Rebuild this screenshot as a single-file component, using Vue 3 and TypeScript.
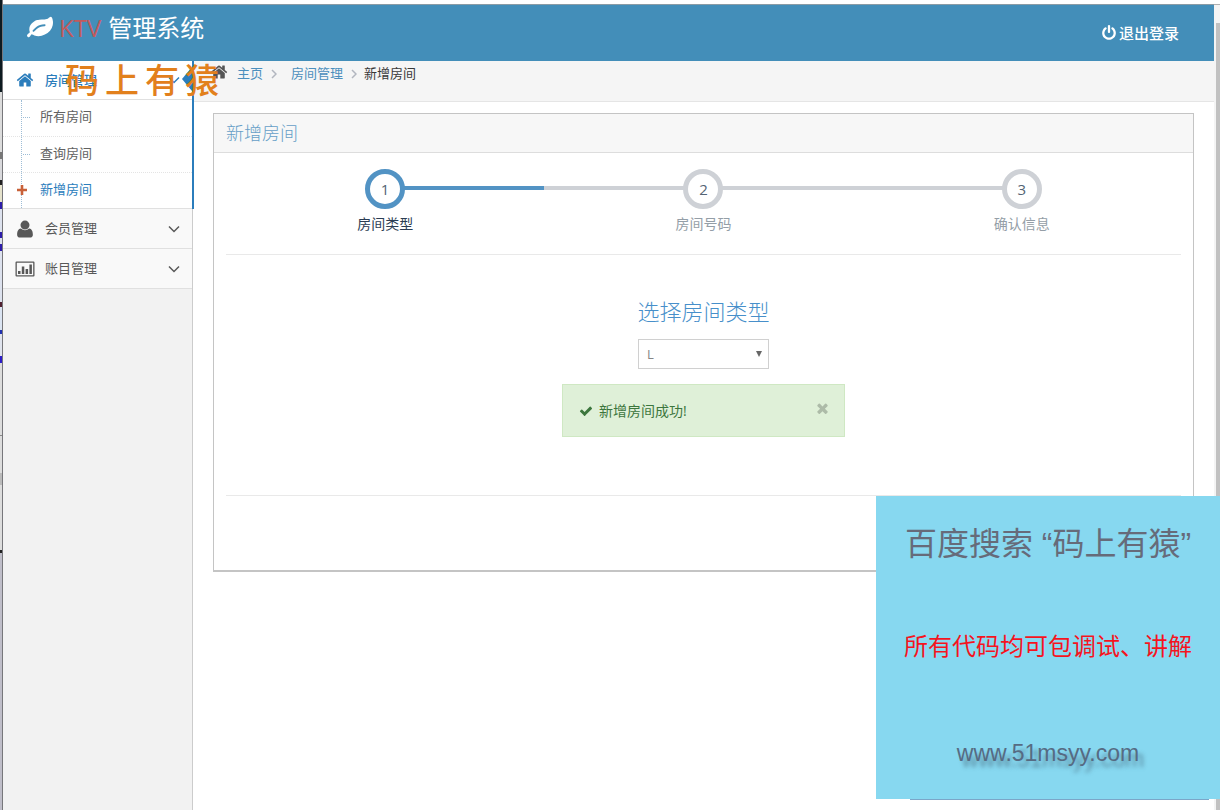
<script setup lang="ts">
import { ref } from 'vue'

interface Step {
  id: number
  label: string
}

const steps: Step[] = [
  { id: 1, label: '房间类型' },
  { id: 2, label: '房间号码' },
  { id: 3, label: '确认信息' },
]
const currentStep = ref(1)

const roomLinks: string[] = ['所有房间', '查询房间', '新增房间']
const activeLink = ref('新增房间')

const roomType = ref('L')
const showAlert = ref(true)
const mark: string[] = ['码', '上', '有', '猿']

const homePath =
  'M1472 992v480q0 26-19 45t-45 19h-384v-384h-256v384h-384q-26 0-45-19t-19-45v-480q0-1 .5-3t.5-3l575-474 575 474q1 2 1 6zm223-69l-62 74q-8 9-21 11h-3q-13 0-21-7l-692-577-692 577q-12 8-24 7-13-2-21-11l-62-74q-8-10-7-23.5t11-21.500l719-599q32-26 76-26t76 26l244 204v-195q0-14 9-23t23-9h192q14 0 23 9t9 23v408l219 182q10 8 11 21.500t-7 23.500z'
</script>

<template>
  <div class="screen">
    <div class="edge"></div>
    <div class="app">
      <header class="navbar">
        <a class="brand" href="#">
          <svg class="leaf" viewBox="0 0 1792 1792" aria-hidden="true">
            <path
              d="M1280 704q0-26-19-45t-45-19q-172 0-318 49.5t-259.5 134-235.5 219.5q-19 21-19 45 0 26 19 45t45 19q24 0 45-19 27-24 74-71t67-66q137-124 268.5-176t313.5-52q26 0 45-19t19-45zm512-198q0 95-20 193-46 224-184.5 383t-357.5 268q-214 108-438 108-148 0-286-47-15-5-88-42t-96-37q-16 0-39.5 32t-45 70-52.5 70-60 32q-43 0-63.5-17.5t-45.5-59.5q-2-4-6-11t-5.5-10-3-9.5-1.5-13.5q0-35 31-73.5t68-65.500 68-56 31-48q0-4-14-38t-16-44q-9-51-9-104 0-115 43.5-220t119-184.5 170.5-139 204-95.500q55-18 145-25.500t179.5-9 178.5-6 163.5-24 113.5-56.500l29.5-29.500 29.5-28 27-20 36.5-16 43.5-4.500q39 0 70.5 46t47.5 112 24 124 8 96z"
            />
          </svg>
          <span class="red">KTV</span>
          <span>管理系统</span>
        </a>
        <button type="button" class="logout">
          <svg viewBox="0 0 1792 1792" aria-hidden="true">
            <path
              d="M1664 896q0 156-61 298t-164 245-245 164-298 61-298-61-245-164-164-245-61-298q0-182 80.5-343t226.5-270q43-32 95.5-25t83.5 50q32 42 24.5 94.5t-49.5 84.5q-98 74-151.5 181t-53.5 228q0 104 40.5 198.5t109.5 163.5 163.5 109.5 198.5 40.5 198.5-40.5 163.5-109.5 109.5-163.5 40.5-198.5q0-121-53.5-228t-151.5-181q-42-32-49.5-84.5t24.5-94.5q31-43 84-50t95 25q146 109 226.5 270t80.5 343zm-640-768v640q0 52-38 90t-90 38-90-38-38-90v-640q0-52 38-90t90-38 90 38 38 90z"
            />
          </svg>
          退出登录
        </button>
      </header>

      <div class="body">
        <nav class="sidebar">
          <div class="group open">
            <a class="item" href="#">
              <svg class="item-icon" viewBox="0 0 1792 1792" aria-hidden="true"><path :d="homePath" /></svg>
              <span class="item-text">房间管理</span>
              <svg class="angle" viewBox="0 0 12 8" aria-hidden="true"><path d="M1 1.500l5 5 5-5" /></svg>
            </a>
            <ul class="submenu">
              <li v-for="link in roomLinks" :key="link" :class="{ active: link === activeLink }">
                <a href="#" @click.prevent="activeLink = link">
                  <svg v-if="link === activeLink" class="plus" viewBox="0 0 10 10" aria-hidden="true">
                    <path d="M3.700 0h2.600v3.700h3.700v2.600h-3.700v3.700h-2.600v-3.700h-3.700v-2.600h3.700z" />
                  </svg>
                  {{ link }}
                </a>
              </li>
            </ul>
          </div>
          <a class="item" href="#">
            <svg class="item-icon" viewBox="0 0 16 16" aria-hidden="true">
              <path
                d="M8 .5a4 4 0 0 1 4 4a4 4 0 0 1-8 0a4 4 0 0 1 4-4zM4.300 7.500q1.700 1.600 3.700 1.600t3.700-1.600c2.300.2 3.300 2.600 3.300 5.500 0 1.600-1 2.500-2.500 2.500h-9c-1.500 0-2.500-.9-2.500-2.500 0-2.900 1-5.300 3.300-5.500z"
              />
            </svg>
            <span class="item-text">会员管理</span>
            <svg class="angle" viewBox="0 0 12 8" aria-hidden="true"><path d="M1 1.500l5 5 5-5" /></svg>
          </a>
          <a class="item" href="#">
            <svg class="item-icon chart" viewBox="0 0 20 16" aria-hidden="true">
              <path
                fill-rule="evenodd"
                d="M1.500 0.500h17a1 1 0 0 1 1 1v13a1 1 0 0 1-1 1h-17a1 1 0 0 1-1-1v-13a1 1 0 0 1 1-1zM1.800 1.800v12.400h16.400v-12.400zM3 10h2.500v3h-2.500zM6.800 5.500h2.500v7.500h-2.500zM10.600 8h2.500v5h-2.500zM14.400 3.500h2.500v9.500h-2.500z"
              />
            </svg>
            <span class="item-text">账目管理</span>
            <svg class="angle" viewBox="0 0 12 8" aria-hidden="true"><path d="M1 1.500l5 5 5-5" /></svg>
          </a>
        </nav>

        <main class="content">
          <nav class="crumbs" aria-label="breadcrumb">
            <svg class="crumb-home" viewBox="0 0 1792 1792" aria-hidden="true"><path :d="homePath" /></svg>
            <a href="#">主页</a>
            <svg class="sep" viewBox="0 0 6 10" aria-hidden="true"><path d="M1 1l4 4-4 4" /></svg>
            <a class="second" href="#">房间管理</a>
            <svg class="sep" viewBox="0 0 6 10" aria-hidden="true"><path d="M1 1l4 4-4 4" /></svg>
            <span>新增房间</span>
          </nav>

          <section class="panel">
            <h1 class="panel-title">新增房间</h1>
            <div class="panel-body">
              <ol class="steps">
                <li v-for="step in steps" :key="step.id" :class="{ active: step.id === currentStep }">
                  <span class="num">{{ step.id }}</span>
                  <span class="label">{{ step.label }}</span>
                </li>
              </ol>
              <div class="form">
                <label for="room-type">选择房间类型</label>
                <div class="select-box">
                  <select id="room-type" v-model="roomType">
                    <option>L</option>
                    <option>M</option>
                    <option>S</option>
                  </select>
                  <svg viewBox="0 0 6 6" aria-hidden="true"><path d="M0 0h6l-3 6z" /></svg>
                </div>
                <div v-if="showAlert" class="alert" role="alert">
                  <svg class="check" viewBox="0 0 1792 1792" aria-hidden="true">
                    <path
                      d="M1671 566q0 40-28 68l-724 724-136 136q-28 28-68 28t-68-28l-136-136-362-362q-28-28-28-68t28-68l136-136q28-28 68-28t68 28l294 295 656-657q28-28 68-28t68 28l136 136q28 28 28 68z"
                    />
                  </svg>
                  <span>新增房间成功!</span>
                  <button type="button" aria-label="关闭" @click="showAlert = false">
                    <svg viewBox="302 302 1188 1252" aria-hidden="true">
                      <path
                        d="M1490 1322q0 40-28 68l-136 136q-28 28-68 28t-68-28l-294-294-294 294q-28 28-68 28t-68-28l-136-136q-28-28-28-68t28-68l294-294-294-294q-28-28-28-68t28-68l136-136q28-28 68-28t68 28l294 294 294-294q28-28 68-28t68 28l136 136q28 28 28 68t-28 68l-294 294 294 294q28 28 28 68z"
                      />
                    </svg>
                  </button>
                </div>
              </div>
            </div>
          </section>
        </main>
      </div>
    </div>
    <div class="scroll"><div class="thumb"></div></div>

    <div class="mark"><span v-for="ch in mark" :key="ch">{{ ch }}</span></div>

    <aside class="promo">
      <p class="promo-title">百度搜索 “码上有猿”</p>
      <p class="promo-red">所有代码均可包调试、讲解</p>
      <a href="#" class="promo-url">www.51msyy.com</a>
    </aside>
  </div>
</template>

<style>
body {
  margin: 0;
  background: #fff;
}
</style>

<style scoped>
.screen {
  position: relative;
  display: flex;
  min-height: 100vh;
  box-sizing: border-box;
  overflow: hidden;
  font: 13px/20px 'Open Sans', 'Noto Sans CJK SC', sans-serif;
  color: #393939;
}
.screen * {
  box-sizing: border-box;
}
a {
  color: inherit;
  text-decoration: none;
}
svg {
  display: block;
  flex: none;
  fill: currentColor;
}
.edge {
  flex: none;
  width: 3px;
  border-right: 1px solid #77777b;
  background: linear-gradient(
    #0d1a20 0 92px, #dcdcdc 92px 152px, #777 152px 159px, #d9d9dc 159px 180px,
    #222 180px 185px, #e5e2cc 185px 202px, #2c1caa 202px 209px, #dde2ee 209px 232px,
    #2c1caa 232px 238px, #dde2ee 238px 244px, #2c1caa 244px 251px, #dde2ee 251px 302px,
    #502030 302px 307px, #dbe4f2 307px 330px, #2030b0 330px 334px, #e0e4ee 334px 356px,
    #2c1cc8 356px 363px, #ddd 363px 435px, #888 435px 436px, #ddd 436px 473px,
    #bbb 473px 485px, #ddd 485px 550px, #222 550px 553px, #bfbec9 553px
  );
}
.app {
  flex: 1;
  min-width: 0;
  display: flex;
  flex-direction: column;
  padding-top: 4px;
}
.navbar {
  display: flex;
  align-items: center;
  justify-content: space-between;
  height: 57px;
  padding: 0 35px 0 24px;
  border-top: 1px solid #8a9ba5;
  background: #438eb9;
  color: #fff;
}
.brand {
  display: flex;
  align-items: center;
  height: 46px;
  margin-bottom: 10px;
  font-size: 24px;
  line-height: 36px;
}
.leaf {
  width: 26px;
  height: 26px;
  margin-right: 6px;
}
.red {
  margin-right: 7px;
  color: #c25a5c;
}
.logout {
  display: flex;
  align-items: center;
  gap: 2px;
  padding: 0;
  border: 0;
  background: none;
  color: #fff;
  font: 500 15px/24px 'Open Sans', 'Noto Sans CJK SC', sans-serif;
  cursor: pointer;
}
.logout svg {
  width: 16px;
  height: 16px;
}
.body {
  flex: 1;
  display: flex;
}
.sidebar {
  position: relative;
  z-index: 1;
  flex: none;
  width: 190px;
  border-right: 1px solid #ccc;
  background: #f2f2f2;
}
.item {
  display: flex;
  align-items: center;
  height: 40px;
  padding: 0 12px;
  border-bottom: 1px solid #e0e0e0;
  background: #f9f9f9;
  color: #585858;
}
.item-icon {
  width: 20px;
  height: 18px;
  margin-right: 10px;
}
.chart {
  height: 16px;
}
.item-text {
  flex: 1;
  padding-bottom: 1px;
}
.angle {
  width: 12px;
  height: 8px;
  fill: none;
  stroke: currentColor;
  stroke-width: 1.5;
}
.group {
  position: relative;
  margin-right: -2px;
  border-right: 2px solid #2b7dbc;
  background: #fff;
}
.group::after {
  content: '';
  position: absolute;
  top: 6px;
  right: 0;
  border: 12px solid transparent;
  border-left: 0;
  border-right: 10px solid #2b7dbc;
}
.group .item {
  height: 39px;
  background: #fff;
  color: #2b7dbc;
  font-weight: 500;
}
.submenu {
  position: relative;
  margin: 0;
  padding: 0;
  border-bottom: 1px solid #e0e0e0;
  list-style: none;
}
.submenu::before {
  content: '';
  position: absolute;
  top: 0;
  bottom: 0;
  left: 18px;
  border-left: 1px dotted #9dbdd6;
}
.submenu li {
  position: relative;
  height: 36px;
}
.submenu li + li {
  border-top: 1px dotted #e4e4e4;
}
.submenu li::before {
  content: '';
  position: absolute;
  top: 17px;
  left: 20px;
  width: 7px;
  border-top: 1px dotted #9dbdd6;
}
.submenu li.active::before {
  display: none;
}
.submenu a {
  display: block;
  padding: 6px 0 8px 37px;
  color: #616161;
}
.submenu .active a {
  color: #2b7dbc;
}
.plus {
  position: absolute;
  top: 12px;
  left: 14px;
  width: 10px;
  height: 10px;
  color: #c86139;
}
.content {
  flex: 1;
  min-width: 0;
  background: #fff;
}
.crumbs {
  display: flex;
  align-items: flex-start;
  height: 41px;
  padding: 2px 17px 0;
  border-bottom: 1px solid #e5e5e5;
  background: #f5f5f5;
}
.crumbs a {
  color: #4c8fbd;
}
.crumb-home {
  width: 18px;
  height: 18px;
  margin-right: 9px;
  color: #555;
}
.sep {
  width: 6px;
  height: 10px;
  margin: 6px 7px 0 8px;
  fill: none;
  stroke: #b2b6bf;
  stroke-width: 1.5;
}
.second {
  margin-left: 7px;
}
.panel {
  margin: 11px 20px 0;
  border: 1px solid #c4c4c4;
  border-bottom-width: 2px;
}
.panel-title {
  margin: 0;
  padding: 0 12px;
  border-bottom: 1px solid #ddd;
  background: #f7f7f7;
  color: #669fc7;
  font-size: 18px;
  font-weight: 300;
  line-height: 38px;
}
.panel-body {
  padding: 16px 12px 74px;
}
.steps {
  display: flex;
  margin: 0;
  padding: 0 0 20px;
  border-bottom: 1px solid #e9e9e9;
  list-style: none;
}
.steps li {
  position: relative;
  flex: 1;
  display: flex;
  flex-direction: column;
  align-items: center;
  color: #949ea7;
}
.steps li::before {
  content: '';
  position: absolute;
  top: 17px;
  left: 0;
  right: 0;
  height: 4px;
  background: #ced1d6;
}
.steps li:first-child::before {
  left: 50%;
}
.steps li:last-child::before {
  right: 50%;
}
.steps li.active::before {
  background: #5293c4;
}
.num {
  position: relative;
  width: 40px;
  height: 40px;
  border: 5px solid #ced1d6;
  border-radius: 50%;
  background: #fff;
  color: #546474;
  font-size: 15px;
  line-height: 30px;
  text-align: center;
}
.active .num {
  border-color: #5293c4;
}
.label {
  margin-top: 5px;
  font-size: 14px;
}
.active .label {
  color: #2b3d53;
}
.form {
  display: flex;
  flex-direction: column;
  align-items: center;
  height: 241px;
  padding-top: 40px;
  border-bottom: 1px solid #e9e9e9;
}
.form label {
  color: #478fca;
  font-size: 22px;
  font-weight: 300;
  line-height: 32px;
}
.select-box {
  position: relative;
  width: 131px;
  margin: 12px 0 15px;
}
.select-box select {
  display: block;
  width: 100%;
  height: 30px;
  padding: 0 8px;
  border: 1px solid #d0d0d0;
  border-radius: 0;
  appearance: none;
  background: #fff;
  color: #858585;
  font: 13px/20px 'Open Sans', 'Noto Sans CJK SC', sans-serif;
}
.select-box svg {
  position: absolute;
  top: 12px;
  right: 7px;
  width: 6px;
  height: 6px;
  color: #666;
  pointer-events: none;
}
.alert {
  display: flex;
  align-items: center;
  width: 283px;
  height: 53px;
  padding: 0 16px;
  border: 1px solid #cfe8c3;
  background: #dff0d8;
  color: #3c763d;
  font-size: 14px;
}
.check {
  width: 14px;
  height: 14px;
  margin-right: 6px;
}
.alert button {
  margin: 0 0 4px auto;
  padding: 0;
  border: 0;
  background: none;
  color: #adbba8;
  cursor: pointer;
}
.alert button svg {
  width: 11px;
  height: 11px;
}
.scroll {
  flex: none;
  width: 6px;
  margin-top: 4px;
  padding: 18px 0 0 2px;
  border-top: 1px solid #b0b0b0;
  background: #f4f4f4;
}
.thumb {
  height: 100%;
  background: #c1c1c1;
}
.mark {
  position: absolute;
  z-index: 2;
  top: 59px;
  left: 65px;
  display: flex;
  gap: 6px;
  color: #e2801c;
  font-family: 'Noto Sans CJK SC', sans-serif;
  font-size: 34px;
  font-weight: 500;
  line-height: 40px;
  pointer-events: none;
}
.promo {
  position: absolute;
  z-index: 2;
  right: 0;
  bottom: 11px;
  display: flex;
  flex-direction: column;
  align-items: center;
  width: 344px;
  height: 303px;
  padding-top: 24px;
  background: #87d8f0;
  font-family: 'Liberation Sans', 'Noto Sans CJK SC', sans-serif;
  white-space: nowrap;
}
.promo::after {
  content: '';
  position: absolute;
  top: 100%;
  left: 34px;
  right: 11px;
  height: 1px;
  background: #7ba6c8;
}
.promo p {
  margin: 0;
}
.promo-title {
  color: #666b7a;
  font-size: 32px;
  line-height: 48px;
}
.promo p.promo-red {
  margin: 61px 0 70px;
  color: #f5141e;
  font-size: 24px;
  line-height: 36px;
}
.promo-url {
  color: #566b83;
  font-size: 23px;
  line-height: 36px;
  text-shadow: 5px 6px 4px rgba(60, 90, 110, 0.6);
}
</style>
